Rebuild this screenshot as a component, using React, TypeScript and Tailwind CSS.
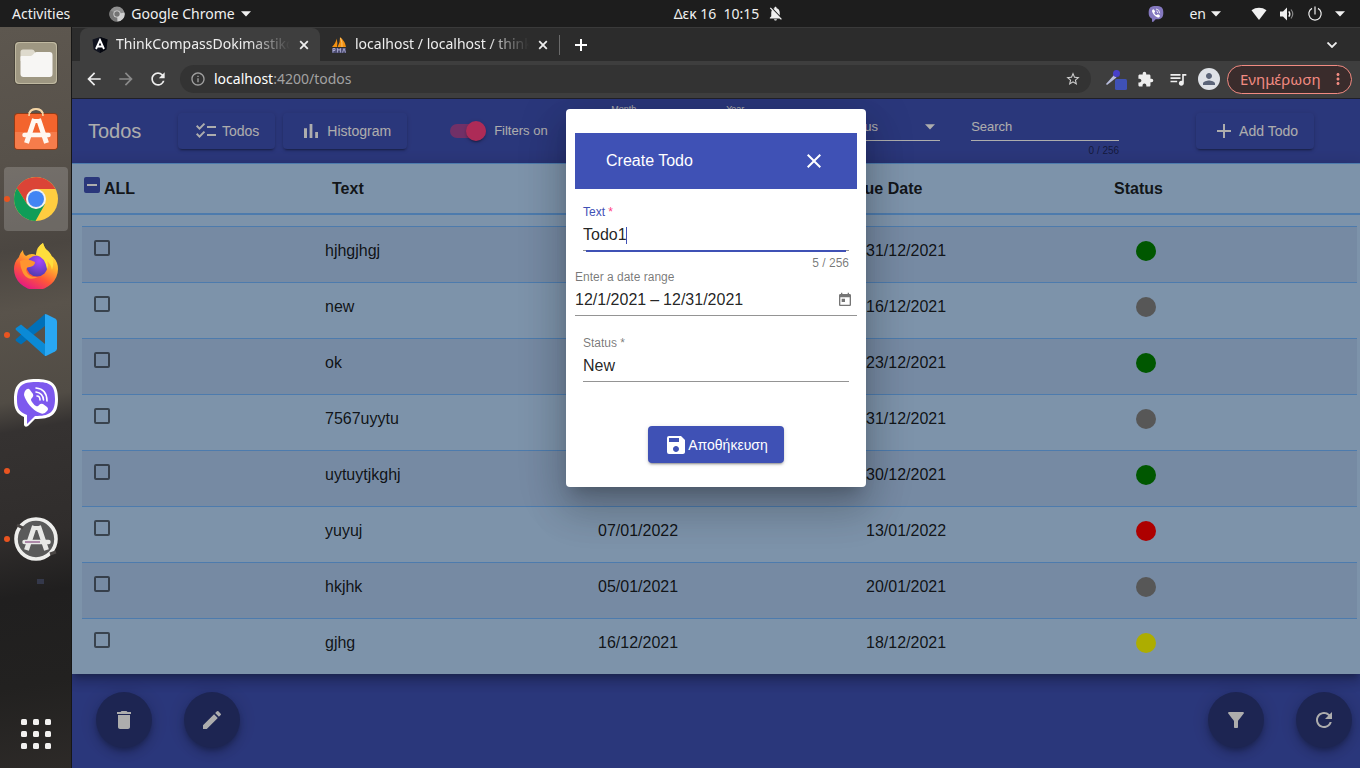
import React from "react";
import {
  MdArrowBack,
  MdAdd,
  MdArrowForward,
  MdChecklist,
  MdClose,
  MdDelete,
  MdEdit,
  MdExtension,
  MdFilterAlt,
  MdInfoOutline,
  MdMoreVert,
  MdNotificationsOff,
  MdPerson,
  MdQueueMusic,
  MdRefresh,
  MdSave,
  MdStarBorder,
} from "react-icons/md";

type Status = "done" | "new" | "late" | "progress";

type Todo = { text: string; start: string; due: string; status: Status };

const todos: Todo[] = [
  { text: "hjhgjhgj", start: "16/12/2021", due: "31/12/2021", status: "done" },
  { text: "new", start: "16/12/2021", due: "16/12/2021", status: "new" },
  { text: "ok", start: "16/12/2021", due: "23/12/2021", status: "done" },
  { text: "7567uyytu", start: "16/12/2021", due: "31/12/2021", status: "new" },
  { text: "uytuytjkghj", start: "16/12/2021", due: "30/12/2021", status: "done" },
  { text: "yuyuj", start: "07/01/2022", due: "13/01/2022", status: "late" },
  { text: "hkjhk", start: "05/01/2021", due: "20/01/2021", status: "new" },
  { text: "gjhg", start: "16/12/2021", due: "18/12/2021", status: "progress" },
];

const statusColor: Record<Status, string> = {
  done: "bg-[#008000]",
  new: "bg-[#808080]",
  late: "bg-[#ff0000]",
  progress: "bg-[#ffff00]",
};

const raised =
  "shadow-[0_3px_1px_-2px_rgba(0,0,0,0.2),0_2px_2px_0_rgba(0,0,0,0.14),0_1px_5px_0_rgba(0,0,0,0.12)]";

function Caret() {
  return (
    <svg viewBox="0 0 10 6" className="h-[6px] w-[10px] fill-current">
      <path d="M0 0.300h10L5 5.600z" />
    </svg>
  );
}

function TabClose() {
  return (
    <svg viewBox="0 0 12 12" className="size-3" fill="none" stroke="currentColor" strokeWidth="1.800">
      <path d="M2.200 2.200l7.600 7.600M9.800 2.200 2.200 9.800" />
    </svg>
  );
}

function ChromeMono() {
  return (
    <svg viewBox="0 0 16 16" className="size-4">
      <circle cx="8" cy="8" r="7.6" fill="#8f8f8f" />
      <path d="M8 8 15.5 6.5A7.6 7.6 0 0 1 8.3 15.6z" fill="#d0d0d0" />
      <path d="M8 8 1.3 4.3A7.6 7.6 0 0 0 8.3 15.6z" fill="#777" />
      <circle cx="8" cy="8" r="3.6" fill="#d8d8d8" />
      <circle cx="8" cy="8" r="2.7" fill="#747474" />
    </svg>
  );
}

function ViberTray() {
  return (
    <svg viewBox="0 0 46 48" className="mr-[25px] size-4">
      <path
        d="M23 0C8 0 1 4 1 21c0 9 3 14 10 17v8q1 3 4 1l7-7C38 40 45 36 45 20 45 4 38 0 23 0z"
        fill="#8478bf"
      />
      <path
        d="M12 12q3-4 5-1l3 4q1 2-1 4-2 1 0 4t4 4q2 1 3-1 2-2 4-1l4 3q2 2 0 4-3 4-7 2C19 31 13 23 11 16q0-2 1-4z"
        fill="#fff"
      />
      <path d="M23 9q11 1 11 13M24 15q4 1 4 6" fill="none" stroke="#fff" strokeWidth="2.500" />
    </svg>
  );
}

function TopBar() {
  return (
    <header className="grid h-[27px] shrink-0 grid-cols-[1fr_auto_1fr] items-center bg-[#1d1d1d] text-sm text-[#f0f0f0]">
      <div className="flex items-center gap-[39px] pl-3">
        <button>Activities</button>
        <button className="flex items-center gap-[6px]">
          <ChromeMono />
          Google Chrome
          <Caret />
        </button>
      </div>
      <button className="flex items-center gap-2 pl-[98px]">
        <span className="whitespace-pre">Δεκ 16  10:15</span>
        <MdNotificationsOff className="size-[17px]" />
      </button>
      <div className="flex items-center justify-end pr-[15px]">
        <ViberTray />
        <button className="mr-[30px] flex items-center gap-[5px]">
          en <Caret />
        </button>
        <button aria-label="System" className="flex items-center gap-3">
          <svg viewBox="0 0 16 14" className="h-[14px] w-4 fill-current">
            <path d="M0.5 3.3C5 0 11 0 15.5 3.3L8 13z" />
          </svg>
          <svg viewBox="0 0 16 16" className="size-4" fill="none" stroke="currentColor">
            <path d="M1 5.5h3l4-4v13l-4-4H1z" fill="currentColor" stroke="none" />
            <path d="M9.8 5.3q2 2.7 0 5.4" strokeWidth="1.4" />
            <path d="M12 3.5q3.5 4.5 0 9" strokeWidth="1.2" opacity="0.5" />
          </svg>
          <svg viewBox="0 0 16 16" className="size-4" fill="none" stroke="currentColor" strokeWidth="1.2">
            <path d="M5 2.4a6.2 6.2 0 1 0 6 0M8 0.5v8" />
          </svg>
          <Caret />
        </button>
      </div>
    </header>
  );
}

function FilesIcon() {
  return (
    <svg viewBox="0 0 44 44" className="size-11">
      <rect x="0" y="0" width="44" height="44" rx="5" fill="#4a453c" />
      <rect x="1" y="1" width="42" height="42" rx="4" fill="#c0b9a1" />
      <rect x="2" y="2" width="40" height="40" rx="4" fill="#9e9782" />
      <path d="M6.500 11q0-2.500 2.500-2.500h9q2 0 2.700 2l.8 1.500H35v8H6.500z" fill="#dedacd" />
      <path d="M6.500 16q0-1 1-1h9q1.500 0 3-2t3-2h13q3 0 3 3v19q0 3-3 3h-26q-3 0-3-3z" fill="#f7f6f4" />
    </svg>
  );
}

function LetterMark({ color }: { color: string }) {
  return (
    <g fill="none" stroke={color}>
      <path d="M18.500 14h8" strokeWidth="4" />
      <path d="M20.500 12 12.500 36M24.500 12l8 24" strokeWidth="5" />
      <path d="M10.500 28h24" strokeWidth="4.500" strokeLinecap="round" />
    </g>
  );
}

function SoftwareIcon() {
  return (
    <svg viewBox="0 0 44 44" className="mb-1 size-11">
      <path d="M15 9q0-7 7-7t7 7" fill="none" stroke="#f3d4a4" strokeWidth="2" />
      <rect x="0" y="6" width="44" height="37" rx="4" fill="#8f3c18" />
      <rect x="1" y="7" width="42" height="35" rx="3" fill="#f3642d" />
      <path d="M1 25h42v14q0 3-3 3H4q-3 0-3-3z" fill="#f67c4b" />
      <path d="M15 9q0-7 7-7t7 7" fill="none" stroke="#f3d4a4" strokeWidth="1.600" />
      <LetterMark color="#fff7f0" />
    </svg>
  );
}

function ChromeIcon() {
  return (
    <svg viewBox="0 0 44 44" className="size-11">
      <circle cx="22" cy="22" r="22" fill="#ffcd40" />
      <path d="M22 22 13 27 3 11A22 22 0 0 1 41 12H22z" fill="#db4437" />
      <path d="M3 11A22 22 0 0 0 21.500 44L31 27 22 32 13 27z" fill="#0f9d58" />
      <path d="M3 11A22 22 0 0 1 41.500 12H22L14 26z" fill="#db4437" />
      <circle cx="22" cy="22" r="10" fill="#f1f1f1" />
      <circle cx="22" cy="22" r="8" fill="#4285f4" />
    </svg>
  );
}

function FirefoxIcon() {
  return (
    <svg viewBox="0 0 44 46" className="mb-0.5 h-[46px] w-11">
      <defs>
        <linearGradient id="ffBody" x1="0.8" y1="0.05" x2="0.3" y2="1">
          <stop offset="0" stopColor="#fff44f" />
          <stop offset="0.35" stopColor="#ffb52e" />
          <stop offset="0.65" stopColor="#ff5a36" />
          <stop offset="1" stopColor="#e31587" />
        </linearGradient>
        <radialGradient id="ffGlobe" cx="0.6" cy="0.25" r="0.8">
          <stop offset="0" stopColor="#a846ff" />
          <stop offset="1" stopColor="#4f3bab" />
        </radialGradient>
      </defs>
      <path
        d="M5 14Q6 10 9 7q0 4 3 6 3-2 6-2 2 0 4 1 0-8 7-12 1 5 5 8 2 2 3 5l2 1q5 5 5 12a22 21 0 0 1-44 0q0-7 5-12z"
        fill="url(#ffBody)"
      />
      <circle cx="23" cy="23" r="10.500" fill="url(#ffGlobe)" />
      <path d="M22 12q2-8 7-12 1 5 5 8 8 7 4 19-1-6-5-9 2 5 0 8-2-12-11-14z" fill="#ffde3c" />
      <path d="M6 18q8-3 15 1 0 4-5 5-4 0-4 3 2 8 12 7-10 5-15-4-3-6-3-12z" fill="#ff9430" />
    </svg>
  );
}

function CodeIcon() {
  return (
    <svg viewBox="0 0 44 44" className="size-11">
      <path d="M31 1v12L7 31.500 2 28q-1-1 0-2z" fill="#0070b8" />
      <path d="M31 43V31L7 11.500 2 15q-1 1 0 2z" fill="#0b8ad6" />
      <path d="M31 1q1 0 2 .5l8 4q2 1 2 3v27q0 2-2 3l-8 4q-1 .5-2 .5z" fill="#29a7f3" />
    </svg>
  );
}

function ViberIcon() {
  return (
    <svg viewBox="0 0 46 48" className="h-12 w-[46px]">
      <path
        d="M23 0C8 0 1 4 1 21c0 9 3 14 10 17v8q1 3 4 1l7-7C38 40 45 36 45 20 45 4 38 0 23 0z"
        fill="#fff"
      />
      <path
        d="M23 3C9 3 4 7 4 21c0 8 2 12 10 15v9l8-8c14 0 20-3 20-17S37 3 23 3z"
        fill="#7d59ee"
      />
      <path
        d="M12 12q3-4 5-1l3 4q1 2-1 4-2 1 0 4t4 4q2 1 3-1 2-2 4-1l4 3q2 2 0 4-3 4-7 2C19 31 13 23 11 16q0-2 1-4z"
        fill="#fff"
      />
      <path d="M23 9q11 1 11 13M23 13q7 1 7.500 8M24 17q3 0 3 4" fill="none" stroke="#fff" strokeWidth="1.600" strokeLinecap="round" />
    </svg>
  );
}

function UpdaterIcon() {
  return (
    <svg viewBox="0 0 44 44" className="size-11">
      <circle cx="22" cy="22" r="20" fill="#5a5a5a" stroke="#eeeeec" strokeWidth="3.600" />
      <path d="M3 8l6 3M36 37l6-2" stroke="#4a4644" strokeWidth="3" />
      <g transform="translate(0 -3)">
        <LetterMark color="#e8e8e6" />
      </g>
      <path d="M11 25h15" stroke="#85487f" strokeWidth="1.200" />
    </svg>
  );
}

function DockItem({
  label,
  running,
  active,
  children,
}: {
  label: string;
  running?: boolean;
  active?: boolean;
  children?: React.ReactNode;
}) {
  return (
    <button
      aria-label={label}
      className={
        "relative flex size-16 shrink-0 items-center justify-center rounded " + (active ? "bg-white/18" : "")
      }
    >
      {running && <span className="absolute top-[29px] left-0 size-[6px] rounded-full bg-[#e95420]" />}
      {children}
    </button>
  );
}

function Dock() {
  return (
    <nav
      aria-label="Dock"
      className="flex w-[72px] shrink-0 flex-col items-center gap-1 border-r border-[#161616] bg-[linear-gradient(170deg,#5d574f_0%,#57514a_18%,#4b4641_30%,#59534b_38%,#514c45_50%,#353231_54%,#302d2c_68%,#201f1f_76%,#222120_88%,#2d2a28_100%)] pt-1 pb-0.5"
    >
      <DockItem label="Files">
        <FilesIcon />
      </DockItem>
      <DockItem label="Ubuntu Software">
        <SoftwareIcon />
      </DockItem>
      <DockItem label="Google Chrome" running active>
        <ChromeIcon />
      </DockItem>
      <DockItem label="Firefox">
        <FirefoxIcon />
      </DockItem>
      <DockItem label="Visual Studio Code" running>
        <CodeIcon />
      </DockItem>
      <DockItem label="Viber">
        <ViberIcon />
      </DockItem>
      <DockItem label="Application" running />
      <DockItem label="Software Updater" running>
        <UpdaterIcon />
      </DockItem>
      <span className="mt-1 ml-[10px] h-[5px] w-[7px] bg-[#34384a]" />
      <button aria-label="Show applications" className="mt-auto flex size-16 items-center justify-center">
        <svg viewBox="0 0 30 30" className="size-[30px] fill-[#f2f1f0]">
          {[0, 12, 24].map((y) =>
            [0, 12, 24].map((x) => <rect key={x + "-" + y} x={x} y={y} width="6" height="6" rx="1.500" />)
          )}
        </svg>
      </button>
    </nav>
  );
}

function AngularIcon() {
  return (
    <svg viewBox="0 0 16 16" className="size-4 shrink-0">
      <path d="M8 0l7.500 2.600L14.300 12.500 8 16l-6.300-3.500L.5 2.600z" fill="#10131f" />
      <path d="M8 0l7.500 2.600L14.300 12.500 8 16z" fill="#05070f" />
      <path d="M4 12 8 3l4 9M5.500 9.500h5" fill="none" stroke="#fff" strokeWidth="1.900" />
    </svg>
  );
}

function PmaIcon() {
  return (
    <svg viewBox="0 0 16 16" className="size-4 shrink-0">
      <path d="M1 10Q5 6 5.500 1.500 7 6 6 10zM6.500 10Q9.500 5 9 0q5 4 6 10z" fill="#f29111" />
      <path d="M9.500 1q2 4 1.500 9" fill="none" stroke="#ffd28a" strokeWidth="0.800" />
      <path d="M1 11h14v5H1z" fill="#4c4c70" />
      <path d="M2 15.500v-4h2v2H2M6.500 15.500v-4l1.500 2 1.500-2v4M11.500 15.500l1.500-4 1.500 4" fill="none" stroke="#b4b4da" strokeWidth="0.800" />
    </svg>
  );
}

const fade = "[mask-image:linear-gradient(to_right,black_76%,transparent)]";

function BrowserChrome() {
  return (
    <div className="shrink-0 border-b border-[#1f1f28] text-[#eeeeee]">
      <div className="flex h-[34px] items-stretch border-t border-[#3a3a3a] bg-[#2c2c2c] pl-2">
        <div className="flex w-60 items-center rounded-t-lg bg-[#3e3e3e] pr-[10px] pl-3 text-sm">
          <AngularIcon />
          <span className={"mb-0.5 ml-2 min-w-0 flex-1 overflow-hidden whitespace-nowrap " + fade}>
            ThinkCompassDokimastiko
          </span>
          <button aria-label="Close tab" className="ml-2">
            <TabClose />
          </button>
        </div>
        <div className="flex w-[239px] items-center pr-[10px] pl-[11px] text-sm">
          <PmaIcon />
          <span className={"mb-0.5 ml-2 min-w-0 flex-1 overflow-hidden whitespace-nowrap " + fade}>
            localhost / localhost / thinkcompass
          </span>
          <button aria-label="Close tab" className="ml-2">
            <TabClose />
          </button>
        </div>
        <span className="h-5 w-px self-center bg-[#6a6a6a]" />
        <button aria-label="New tab" className="ml-[15px]">
          <svg viewBox="0 0 12 12" className="size-3" stroke="#ffffff" strokeWidth="2">
            <path d="M6 0v12M0 6h12" />
          </svg>
        </button>
        <button aria-label="Search tabs" className="mr-[23px] ml-auto">
          <svg viewBox="0 0 10 6" className="h-[6px] w-[10px]" fill="none" stroke="currentColor" strokeWidth="1.800">
            <path d="M0.500 0.500 5 5 9.500 0.500" />
          </svg>
        </button>
      </div>
      <div className="flex h-[37px] items-center bg-[#3e3e3e] pr-2 pb-px pl-3">
        <button aria-label="Back">
          <MdArrowBack className="size-5" />
        </button>
        <button aria-label="Forward" className="ml-3 text-[#8a8a8a]">
          <MdArrowForward className="size-5" />
        </button>
        <button aria-label="Reload" className="ml-3">
          <MdRefresh className="size-5" />
        </button>
        <div className="ml-3 flex h-7 min-w-0 flex-1 items-center rounded-full bg-[#333333] px-[10px]">
          <MdInfoOutline className="size-4 shrink-0 text-[#a0a0a0]" />
          <a href="http://localhost:4200/todos" className="ml-2 min-w-0 flex-1 truncate text-sm text-[#a2a2a2]">
            <span className="text-white">localhost</span>:4200/todos
          </a>
          <button aria-label="Bookmark" className="text-[#cfcfcf]">
            <MdStarBorder className="size-4" />
          </button>
        </div>
        <button aria-label="Colour picker" className="ml-[14px]">
          <svg viewBox="0 0 22 22" className="size-[22px]">
            <path d="M1 16 9 7l2.500 2.500L2 17z" fill="#b9bedd" />
            <circle cx="11.500" cy="5.500" r="3.500" fill="#4740c8" />
            <rect x="10" y="11" width="12" height="11" rx="1.500" fill="#3f51b5" />
          </svg>
        </button>
        <button aria-label="Extensions" className="ml-[10px]">
          <MdExtension className="size-[17px]" />
        </button>
        <button aria-label="Media controls" className="ml-[14px]">
          <MdQueueMusic className="size-5" />
        </button>
        <button
          aria-label="Profile"
          className="ml-[10px] flex size-[22px] items-center justify-center rounded-full bg-[#dee1e6] text-[#5b6478]"
        >
          <MdPerson className="size-[18px]" />
        </button>
        <button className="ml-[7px] flex h-[29px] w-[125px] items-center justify-between rounded-full border border-[#f28b82] bg-[#3a2c2c] pr-1 pl-3 text-[15px] text-[#f28b82]">
          Ενημέρωση
          <MdMoreVert className="size-[18px]" />
        </button>
      </div>
    </div>
  );
}

function FilterSelect({ label, value }: { label: string; value?: string }) {
  return (
    <label className="relative flex h-[27px] w-[99px] items-center border-b border-white text-[13px]">
      {value && <span className="absolute -top-[11px] left-0 text-[9px] leading-3">{label}</span>}
      <select
        aria-label={label}
        defaultValue={value ?? label}
        className="w-full appearance-none bg-transparent outline-none"
      >
        <option>{value ?? label}</option>
      </select>
      <span className="pointer-events-none absolute right-[5px]">
        <Caret />
      </span>
    </label>
  );
}

function Toolbar() {
  const flat = "flex h-9 items-center rounded text-sm whitespace-nowrap " + raised;
  return (
    <div className="flex h-16 items-center bg-[#3f51b5] pr-[46px] pl-4 text-white">
      <h1 className="w-[90px] text-xl">Todos</h1>
      <button className={flat + " px-4"}>
        <MdChecklist className="mr-1 size-6" />
        Todos
      </button>
      <button className={flat + " ml-2 px-4"}>
        <svg viewBox="0 0 24 24" className="mr-1 size-6 fill-current">
          <path d="M5 9.200h3V19H5zM10.600 5h2.800v14h-2.800zm5.600 8H19v6h-2.800z" />
        </svg>
        Histogram
      </button>
      <label className="ml-[43px] flex w-[161px] items-center gap-2 text-[13px]">
        <input type="checkbox" role="switch" defaultChecked className="sr-only" />
        <span className="flex h-[14px] w-9 items-center justify-end rounded-full bg-[#ff4081]/54">
          <span className={"size-5 shrink-0 rounded-full bg-[#ff4081] " + raised} />
        </span>
        Filters on
      </label>
      <div className="mb-2 flex gap-4">
        <FilterSelect label="Month" value="12" />
        <FilterSelect label="Year" value="2021" />
        <FilterSelect label="Status" />
      </div>
      <div className="relative mb-2 ml-[31px] w-[148px]">
        <input
          aria-label="Search"
          placeholder="Search"
          className="block h-[27px] w-full border-b border-white bg-transparent text-[13px] outline-none placeholder:text-white"
        />
        <span className="absolute top-[31px] right-0 text-[10px] leading-3 text-black/54">0 / 256</span>
      </div>
      <button className={flat + " ml-auto pr-4 pl-4"}>
        <MdAdd className="mr-[3px] size-6" />
        Add Todo
      </button>
    </div>
  );
}

function TodoTable() {
  return (
    <table className="relative block border-t border-[#72b6ff] bg-[#b8d9fb] text-base text-black/87 shadow-[0_5px_5px_-3px_rgba(0,0,0,0.2),0_8px_10px_1px_rgba(0,0,0,0.14),0_3px_14px_2px_rgba(0,0,0,0.12)]">
      <thead className="block">
        <tr className="grid h-[51px] grid-cols-[260fr_260fr_261fr_261fr_246fr] items-center border-b-2 border-[#72b6ff] text-left">
          <th>
            <label className="flex items-center gap-1 pl-3">
              <input type="checkbox" className="sr-only" />
              <span className="mb-[7px] flex size-4 items-center justify-center rounded-xs bg-[#3f51b5]">
                <span className="h-0.5 w-[10px] bg-white" />
              </span>
              ALL
            </label>
          </th>
          <th>Text</th>
          <th>Start Date</th>
          <th>Due Date</th>
          <th>Status</th>
        </tr>
      </thead>
      <tbody className="block pt-[11px] pr-[3px] pl-[10px]">
        {todos.map((todo, i) => (
          <tr
            key={i}
            className={
              "grid h-14 grid-cols-[243fr_273fr_268fr_270fr_221fr] items-center border-t border-[#72b6ff] pb-2 " +
              (i % 2 === 0 ? "bg-[#afccf1]" : "")
            }
          >
            <td className="flex pb-[6px] pl-3">
              <input
                type="checkbox"
                aria-label={"Select " + todo.text}
                className="size-4 appearance-none rounded-xs border-2 border-black/54"
              />
            </td>
            <td>{todo.text}</td>
            <td>{todo.start}</td>
            <td>{todo.due}</td>
            <td>
              <span
                role="img"
                aria-label={todo.status}
                className={"block size-5 rounded-full " + statusColor[todo.status]}
              />
            </td>
          </tr>
        ))}
      </tbody>
    </table>
  );
}

function Fab({ label, children }: { label: string; children: React.ReactNode }) {
  return (
    <button
      aria-label={label}
      className="flex size-14 items-center justify-center rounded-full bg-[#2b377a] text-white shadow-[0_3px_5px_-1px_rgba(0,0,0,0.2),0_6px_10px_0_rgba(0,0,0,0.14),0_1px_18px_0_rgba(0,0,0,0.12)]"
    >
      {children}
    </button>
  );
}

function CreateDialog() {
  const label = "block text-xs leading-4 text-black/54";
  const value = "bg-transparent leading-6 outline-none";
  return (
    <form
      role="dialog"
      aria-label="Create Todo"
      className="w-[300px] rounded bg-white px-[9px] py-6 text-base text-black/87 shadow-[0_11px_15px_-7px_rgba(0,0,0,0.2),0_24px_38px_3px_rgba(0,0,0,0.14),0_9px_46px_8px_rgba(0,0,0,0.12)]"
    >
      <div className="flex h-14 items-center justify-between bg-[#3f51b5] pr-[31px] pl-[31px] text-white">
        <h2>Create Todo</h2>
        <button type="button" aria-label="Close">
          <MdClose className="size-6" />
        </button>
      </div>
      <div className="px-2 pt-[15px]">
        <label htmlFor="todo-text" className="block text-xs leading-4 text-[#3f51b5]">
          Text <span className="text-[#ff4081]">*</span>
        </label>
        <div className="flex items-center py-[3px]">
          <input id="todo-text" defaultValue="Todo1" className={"-mr-px field-sizing-content " + value} />
          <span className="h-[17px] w-px bg-[#3f51b5]" />
        </div>
        <div className="border-t border-black/42">
          <div className="-mt-px mx-[3px] h-0.5 bg-[#3f51b5]" />
        </div>
        <p className="pt-[5px] text-right text-xs leading-3 text-black/54">5 / 256</p>
      </div>
      <div>
        <label htmlFor="range-start" className={label}>
          Enter a date range
        </label>
        <div className="flex items-center gap-1 border-b border-black/42 py-[3px]">
          <input id="range-start" defaultValue="12/1/2021" className={"field-sizing-content " + value} />
          <span>–</span>
          <input aria-label="End date" defaultValue="12/31/2021" className={"field-sizing-content " + value} />
          <button type="button" aria-label="Open calendar" className="mr-1 ml-auto text-black/54">
            <svg viewBox="0 0 24 24" className="size-4 fill-current">
              <path d="M19 3h-1V1h-2v2H8V1H6v2H5c-1.110 0-1.990.9-1.990 2L3 19c0 1.100.89 2 2 2h14c1.100 0 2-.9 2-2V5c0-1.100-.9-2-2-2zm0 16H5V8h14v11zM7 10h5v5H7z" />
            </svg>
          </button>
        </div>
      </div>
      <div className="px-2 pt-[19px]">
        <label htmlFor="todo-status" className={label}>
          Status *
        </label>
        <div className="flex border-b border-black/42 py-[3px]">
          <select id="todo-status" className={"w-full appearance-none " + value}>
            <option>New</option>
          </select>
        </div>
      </div>
      <div className="flex justify-center pt-11">
        <button
          type="button"
          className={"flex h-[37px] items-center rounded bg-[#3f51b5] px-4 text-sm text-white " + raised}
        >
          <MdSave className="size-6" />
          Αποθήκευση
        </button>
      </div>
    </form>
  );
}

export default function App() {
  return (
    <div className="flex min-h-screen flex-col font-['Noto_Sans',sans-serif]">
      <TopBar />
      <div className="flex flex-1">
        <Dock />
        <div className="flex min-w-0 flex-1 flex-col">
          <BrowserChrome />
          <main className="relative flex flex-1 flex-col overflow-hidden bg-[#3f51b5] font-['Liberation_Sans',sans-serif]">
            <Toolbar />
            <TodoTable />
            <div className="flex items-center pt-[18px] pr-2 pb-4 pl-6">
              <div className="flex gap-8">
                <Fab label="Delete">
                  <MdDelete className="size-6" />
                </Fab>
                <Fab label="Edit">
                  <MdEdit className="size-6" />
                </Fab>
              </div>
              <div className="ml-auto flex gap-8">
                <Fab label="Filter">
                  <MdFilterAlt className="size-6" />
                </Fab>
                <Fab label="Refresh">
                  <MdRefresh className="size-6" />
                </Fab>
              </div>
            </div>
            <div className="absolute inset-0 flex items-start justify-center bg-black/32 pt-[10px]">
              <CreateDialog />
            </div>
          </main>
        </div>
      </div>
    </div>
  );
}
